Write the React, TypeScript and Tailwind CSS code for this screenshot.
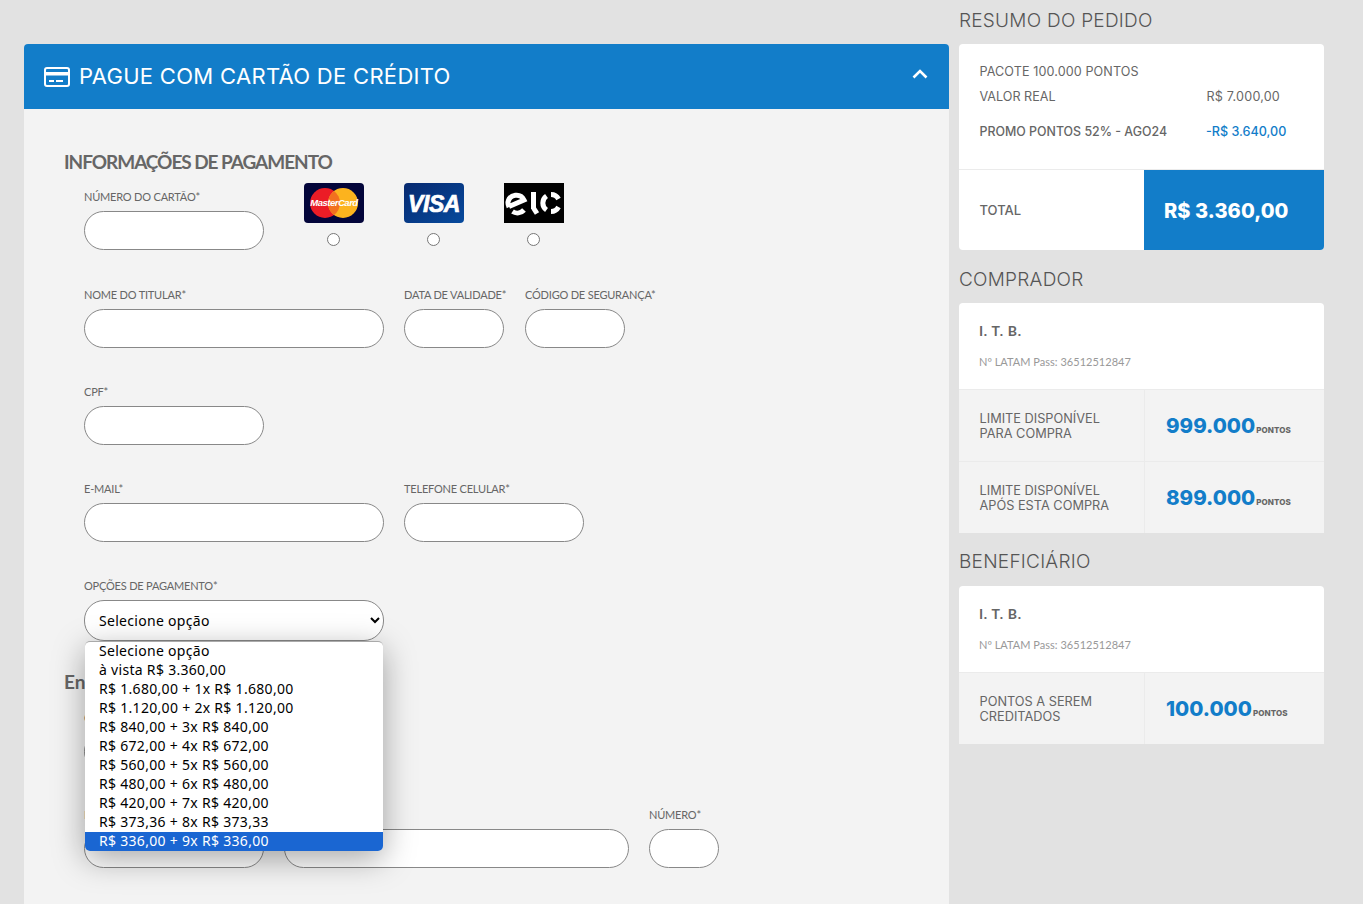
import React from "react";

const blue = "#127dc9";

function Field({ label, w }: { label: string; w: string }) {
  return (
    <div className={`flex flex-col ${w}`}>
      <label className="h-[22px] font-['Lato',sans-serif] text-[11px] leading-[15px] tracking-[-0.2px] text-[#666] whitespace-nowrap">{label}</label>
      <input type="text" className="h-[39px] w-full rounded-[20px] border border-[#888] bg-white" />
    </div>
  );
}

function MasterCard() {
  return (
    <svg viewBox="0 0 60 40" className="h-10 w-[60px]">
      <rect width="60" height="40" rx="4" fill="#03053a" />
      <circle cx="21" cy="20" r="15" fill="#eb1c26" />
      <circle cx="39" cy="20" r="15" fill="#fcb31e" />
      <path d="M30 8a15 15 0 0 1 0 24a15 15 0 0 1 0-24z" fill="#f2701f" />
      <text x="30" y="23" textAnchor="middle" fontFamily="Liberation Sans, sans-serif" fontSize="9.5" fontWeight="700" fontStyle="italic" fill="#fff" letterSpacing="-0.5">MasterCard</text>
    </svg>
  );
}

function Visa() {
  return (
    <svg viewBox="0 0 60 40" className="h-10 w-[60px]">
      <defs>
        <linearGradient id="vg" x1="0" y1="0" x2="1" y2="1">
          <stop offset="0" stopColor="#07296f" />
          <stop offset="1" stopColor="#064a9d" />
        </linearGradient>
      </defs>
      <rect width="60" height="40" rx="4" fill="url(#vg)" />
      <text x="30" y="28.5" textAnchor="middle" fontFamily="Liberation Sans, sans-serif" fontSize="23" fontWeight="700" fontStyle="italic" fill="#fff" stroke="#fff" strokeWidth="0.7" letterSpacing="-0.4">VISA</text>
    </svg>
  );
}

function Elo() {
  return (
    <svg viewBox="0 0 60 40" className="h-10 w-[60px]">
      <rect width="60" height="40" fill="#000" />
      <g fill="none" stroke="#fff" strokeWidth="5">
        <path d="M5 23.5L20 17A8.5 8.5 0 0 0 4 19A9 9 0 0 0 5 24" />
        <path d="M8.5 28.5A9 9 0 0 0 20 27" />
        <path d="M29.5 9V26" />
        <path d="M33 30.5L29.5 25" />
        <path d="M42.5 13A8.5 8.5 0 0 0 42.5 27" />
        <path d="M47 11.5A8.5 8.5 0 0 1 54.5 16" />
        <path d="M54.5 24A8.5 8.5 0 0 1 47 28.5" />
      </g>
    </svg>
  );
}

function Brand({ children }: { children: React.ReactNode }) {
  return (
    <div className="flex w-[60px] flex-col items-center gap-[10px]">
      {children}
      <input type="radio" name="brand" className="m-0 h-[13px] w-[13px] -translate-x-px" />
    </div>
  );
}

const options = [
  "Selecione opção",
  "à vista R$ 3.360,00",
  "R$ 1.680,00 + 1x R$ 1.680,00",
  "R$ 1.120,00 + 2x R$ 1.120,00",
  "R$ 840,00 + 3x R$ 840,00",
  "R$ 672,00 + 4x R$ 672,00",
  "R$ 560,00 + 5x R$ 560,00",
  "R$ 480,00 + 6x R$ 480,00",
  "R$ 420,00 + 7x R$ 420,00",
  "R$ 373,36 + 8x R$ 373,33",
  "R$ 336,00 + 9x R$ 336,00",
];

const opt = "font-['Noto_Sans',sans-serif] text-[14px] tracking-[0.3px]";

function SideHeading({ children, cls }: { children: React.ReactNode; cls: string }) {
  return <h2 className={`font-['Inter',sans-serif] text-[19px] leading-[24px] font-light tracking-[0.25px] text-[#555] ${cls}`}>{children}</h2>;
}

function Person() {
  return (
    <div className="h-[86px] px-5 pt-[19px]">
      <div className="font-['Lato',sans-serif] text-[14px] leading-[18px] tracking-[0.7px] font-bold text-[#666]">I. T. B.</div>
      <div className="mt-[14px] font-['Lato',sans-serif] text-[11px] leading-[16px] tracking-[0.02px] text-[#999]">Nº LATAM Pass: 36512512847</div>
    </div>
  );
}

function LimitRow({ a, b, value }: { a: string; b: string; value: string }) {
  return (
    <div className="flex h-[72px] border-t border-[#ebebeb] bg-[#f3f3f3]">
      <div className="flex w-[186px] flex-col justify-center border-r border-[#ebebeb] pl-[20.5px] font-['Inter',sans-serif] text-[12.75px] leading-[15px] font-normal text-[#666]">
        <span>{a}</span>
        <span>{b}</span>
      </div>
      <div className="flex flex-1 items-baseline pl-[21px] pt-[22px]">
        <span className="font-['Inter',sans-serif] text-[20.5px] leading-[28px] font-extrabold text-[#127dc9]">{value}</span>
        <span className="ml-px font-['Inter',sans-serif] text-[8px] tracking-[0.1px] font-extrabold text-[#666]">PONTOS</span>
      </div>
    </div>
  );
}

export default function App() {
  return (
    <div className="flex h-[904px] items-start gap-[10px] overflow-hidden bg-[#e2e2e2] pl-6">
      <main className="mt-11 h-[860px] w-[925px] shrink-0 rounded-t bg-[#f3f3f3]">
        <header className="flex h-[65px] items-center rounded-t pr-5 pl-5 text-white" style={{ background: blue }}>
          <svg viewBox="0 0 26 20" className="h-[20px] w-[26px]" fill="none" stroke="#fff" strokeWidth="2">
            <rect x="1" y="1" width="24" height="18" rx="2" />
            <rect x="1" y="5" width="24" height="3.5" fill="#fff" stroke="none" />
            <path d="M5 14h5M12 14h7" />
          </svg>
          <h1 className="ml-[9px] font-['Inter',sans-serif] text-[22px] font-normal tracking-[0.3px] whitespace-nowrap">PAGUE COM CARTÃO DE CRÉDITO</h1>
          <svg viewBox="0 0 16 10" className="mt-[-5px] mr-[1px] ml-auto h-[10px] w-[16px]" fill="none" stroke="#fff" strokeWidth="2.6">
            <path d="M1.5 8.5L8 2l6.5 6.5" />
          </svg>
        </header>

        <div className="px-10 pt-[41px]">
          <h2 className="font-['Lato',sans-serif] text-[19px] leading-[24px] font-bold tracking-[-1.05px] text-[#666]">INFORMAÇÕES DE PAGAMENTO</h2>

          <div className="px-5">
            <div className="mt-[9px] flex items-start">
              <div className="pt-[6px]"><Field label="NÚMERO DO CARTÃO*" w="w-[180px]" /></div>
              <div className="ml-10 flex gap-10">
                <Brand><MasterCard /></Brand>
                <Brand><Visa /></Brand>
                <Brand><Elo /></Brand>
              </div>
            </div>

            <div className="mt-[37px] flex gap-5">
              <Field label="NOME DO TITULAR*" w="w-[300px]" />
              <Field label="DATA DE VALIDADE*" w="w-[100px]" />
              <div className="ml-px"><Field label="CÓDIGO DE SEGURANÇA*" w="w-[100px]" /></div>
            </div>

            <div className="mt-[36px]">
              <Field label="CPF*" w="w-[180px]" />
            </div>

            <div className="mt-[36px] flex gap-5">
              <Field label="E-MAIL*" w="w-[300px]" />
              <Field label="TELEFONE CELULAR*" w="w-[180px]" />
            </div>

            <div className="relative z-10 mt-[36px] w-[300px]">
              <label className="block h-[22px] font-['Lato',sans-serif] text-[11px] leading-[15px] tracking-[-0.2px] text-[#666]">OPÇÕES DE PAGAMENTO*</label>
              <select defaultValue="Selecione opção" className={`block h-[41px] w-full rounded-[20px] border border-[#888] bg-white pl-[10px] text-black ${opt}`}>
                {options.map((o) => <option key={o}>{o}</option>)}
              </select>
              <ul className="absolute top-[63px] left-px w-[298px] overflow-hidden rounded-[5px] border-t border-[#aaa] bg-white text-black shadow-[0_8px_32px_rgba(0,0,0,0.35)]">
                {options.map((o, i) => (
                  <li key={o} className={`h-[19px] pl-[14px] leading-[18px] whitespace-nowrap ${opt} ${i === 10 ? "bg-[#1a66d2] text-white" : ""}`}>{o}</li>
                ))}
              </ul>
            </div>
          </div>

          <h2 className="mt-[29px] font-['Lato',sans-serif] text-[19px] leading-[24px] font-bold text-[#666]">Endereço</h2>

          <div className="px-5">
            <div className="mt-[16px]">
              <Field label="CEP*" w="w-[180px]" />
            </div>
            <div className="mt-[36px] flex gap-5">
              <Field label="BAIRRO*" w="w-[180px]" />
              <Field label="ENDEREÇO*" w="w-[345px]" />
              <Field label="NÚMERO*" w="w-[70px]" />
            </div>
          </div>
        </div>
      </main>

      <aside className="w-[365px] shrink-0">
        <SideHeading cls="mt-[9px] mb-[11px]">RESUMO DO PEDIDO</SideHeading>
        <section className="overflow-hidden rounded bg-white">
          <div className="h-[126px] border-b border-[#ebebeb] pt-5 pl-[20.5px] font-['Inter',sans-serif] text-[12.6px] text-[#666]">
            <div className="leading-[15px] tracking-[0.1px]">PACOTE 100.000 PONTOS</div>
            <div className="mt-[10px] flex leading-[15px]">
              <span className="w-[227px]">VALOR REAL</span>
              <span className="tracking-[0.2px]">R$ 7.000,00</span>
            </div>
            <div className="mt-5 flex leading-[15px] font-medium">
              <span className="w-[226.5px] text-[12.4px]">PROMO PONTOS 52% - AGO24</span>
              <span className="text-[#127dc9]">-R$ 3.640,00</span>
            </div>
          </div>
          <div className="flex h-[80px]">
            <div className="flex w-[185px] items-center pt-[2px] pl-[20.5px] font-['Inter',sans-serif] text-[13px] font-medium text-[#666]">TOTAL</div>
            <div className="flex flex-1 items-center pt-[2px] pl-[20px] font-['Inter',sans-serif] text-[20px] tracking-[0.05px] font-extrabold text-white" style={{ background: blue }}>R$ 3.360,00</div>
          </div>
        </section>

        <SideHeading cls="mt-[18px] mb-[11px]">COMPRADOR</SideHeading>
        <section className="overflow-hidden rounded-t bg-white">
          <Person />
          <LimitRow a="LIMITE DISPONÍVEL" b="PARA COMPRA" value="999.000" />
          <LimitRow a="LIMITE DISPONÍVEL" b="APÓS ESTA COMPRA" value="899.000" />
        </section>

        <SideHeading cls="mt-[17px] mb-[12px]">BENEFICIÁRIO</SideHeading>
        <section className="overflow-hidden rounded-t bg-white">
          <Person />
          <LimitRow a="PONTOS A SEREM" b="CREDITADOS" value="100.000" />
        </section>
      </aside>
    </div>
  );
}
